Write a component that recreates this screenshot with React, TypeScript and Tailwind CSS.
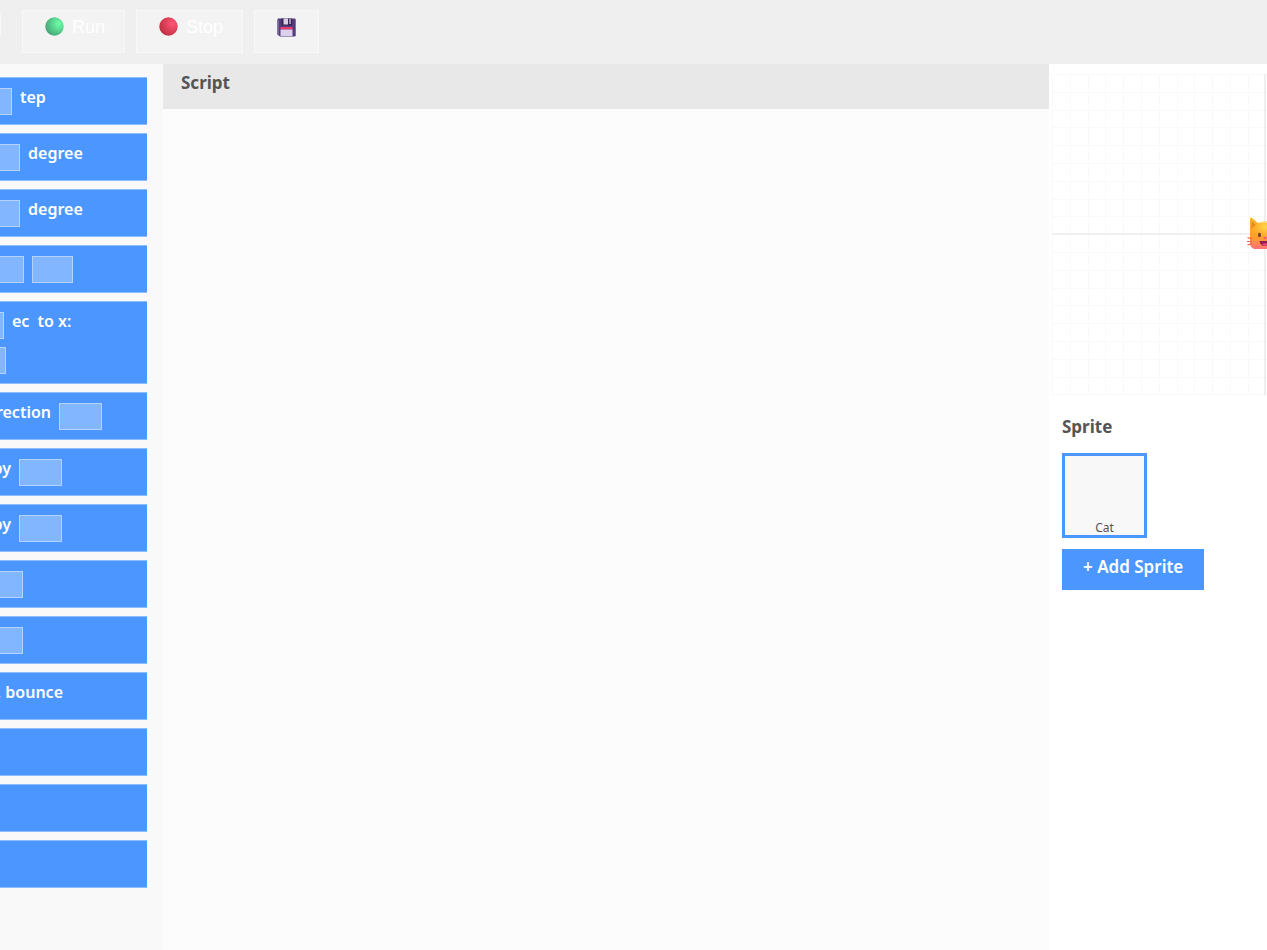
import React, { useState } from "react";

type Part =
  | { kind: "text"; value: string; width?: string }
  | { kind: "input"; label: string; width: string; cut?: boolean };

interface Block {
  id: string;
  rows: Part[][];
}

// Motion blocks, the palette is scrolled so the first part of a row may be cut
const BLOCKS: Block[] = [
  { id: "move", rows: [[{ kind: "input", label: "Steps", width: "w-3", cut: true }, { kind: "text", value: "tep" }]] },
  { id: "turn-right", rows: [[{ kind: "input", label: "Right", width: "w-5", cut: true }, { kind: "text", value: "degree" }]] },
  { id: "turn-left", rows: [[{ kind: "input", label: "Left", width: "w-5", cut: true }, { kind: "text", value: "degree" }]] },
  {
    id: "go-to",
    rows: [[{ kind: "input", label: "Go x", width: "w-6", cut: true }, { kind: "input", label: "Go y", width: "w-[41px]" }]],
  },
  {
    id: "glide",
    rows: [
      [
        { kind: "input", label: "Seconds", width: "w-1", cut: true },
        { kind: "text", value: "ec" },
        { kind: "text", value: "to x:" },
      ],
      [{ kind: "input", label: "Glide x", width: "w-[6px]", cut: true }],
    ],
  },
  {
    id: "direction",
    rows: [[{ kind: "text", value: "rection", width: "w-[51px]" }, { kind: "input", label: "Direction", width: "w-[43px]" }]],
  },
  { id: "change-x", rows: [[{ kind: "text", value: "by", width: "w-[11px]" }, { kind: "input", label: "Change x", width: "w-[43px]" }]] },
  { id: "change-y", rows: [[{ kind: "text", value: "by", width: "w-[11px]" }, { kind: "input", label: "Change y", width: "w-[43px]" }]] },
  { id: "set-x", rows: [[{ kind: "input", label: "Set x", width: "w-[23px]", cut: true }]] },
  { id: "set-y", rows: [[{ kind: "input", label: "Set y", width: "w-[23px]", cut: true }]] },
  { id: "bounce", rows: [[{ kind: "text", value: ", bounce", width: "w-[63px]" }]] },
  { id: "x-position", rows: [[]] },
  { id: "y-position", rows: [[]] },
  { id: "direction-value", rows: [[]] },
];

const CELL = 17.8;

function BlockPart({ part }: { part: Part }) {
  if (part.kind === "text") {
    return <span className={`flex justify-end whitespace-nowrap ${part.width ?? ""}`}>{part.value}</span>;
  }
  return (
    <input
      type="text"
      aria-label={part.label}
      className={`mt-[3px] h-[27px] shrink-0 border border-white/40 bg-white/30 ${part.cut ? "border-l-0" : ""} ${part.width}`}
    />
  );
}

function Ball({ id, from, to }: { id: string; from: string; to: string }) {
  return (
    <svg width="19" height="19" viewBox="0 0 19 19" aria-hidden="true">
      <defs>
        <radialGradient id={id} cx="0.72" cy="0.35" r="0.75">
          <stop offset="0" stopColor={from} />
          <stop offset="1" stopColor={to} />
        </radialGradient>
      </defs>
      <circle cx="9.5" cy="9.5" r="9.2" fill={`url(#${id})`} />
    </svg>
  );
}

function Floppy() {
  return (
    <svg width="19" height="19" viewBox="0 0 19 19" aria-hidden="true">
      <path d="M1.5 0.5H17.5Q18.7 0.5 18.7 1.7V17.3Q18.7 18.5 17.5 18.5H3L0.4 16.5V1.7Q0.4 0.5 1.5 0.5Z" fill="#533b7c" />
      <path d="M0.4 2H2V17.5L0.4 16.5Z" fill="#7a6a9c" />
      <rect x="4.5" y="0.5" width="10.5" height="7" fill="#36264f" />
      <rect x="6.5" y="0.5" width="4.5" height="6" fill="#d9cde6" />
      <rect x="12" y="0.5" width="2" height="5.5" fill="#9c8fb5" />
      <rect x="3.5" y="9" width="12" height="2.5" fill="#e8396b" />
      <rect x="3.5" y="11.5" width="12" height="6.5" fill="#dcd0ec" />
    </svg>
  );
}

function Cat() {
  return (
    <g transform="translate(195 143)">
      <defs>
        <linearGradient id="fur" x1="0.3" y1="0" x2="0.2" y2="1">
          <stop offset="0" stopColor="#fbb52c" />
          <stop offset="0.65" stopColor="#ff9d30" />
          <stop offset="1" stopColor="#ff6f7c" />
        </linearGradient>
        <radialGradient id="face" cx="0.5" cy="0.25" r="0.5">
          <stop offset="0" stopColor="#ffd848" />
          <stop offset="1" stopColor="#ffb62e" stopOpacity="0" />
        </radialGradient>
      </defs>
      <path d="M3 2Q3 0 5 1L11 6H25L31 1Q33 0 33 2V29Q31 32 28 32H8Q5 32 3 28Z" fill="url(#fur)" />
      <path d="M4.500 4L9 8L4.500 12Z" fill="#e88a25" />
      <ellipse cx="18" cy="16" rx="14" ry="12" fill="url(#face)" />
      <path d="M0.500 20.500L5 22M0 24.500H5M0.500 28L5 26.500" stroke="#f0604e" strokeWidth="1.200" fill="none" />
      <ellipse cx="12.500" cy="18" rx="1.500" ry="2.300" fill="#70402f" />
      <ellipse cx="23.500" cy="18" rx="1.500" ry="2.300" fill="#70402f" />
      <path d="M16 20H20L18 22.500Z" fill="#ff4d86" />
      <path d="M12.500 24H23.500Q23 29 18 29Q13 29 12.500 24Z" fill="#8c1f4f" />
      <path d="M15 27Q18 25.500 21 27Q20 29 18 29Q16 29 15 27Z" fill="#f0417e" />
    </g>
  );
}

function Stage() {
  const columns = Array.from({ length: 12 }, (_, i) => i);
  const lines = Array.from({ length: 19 }, (_, i) => i);
  return (
    <svg className="ml-[3px] mt-2.5 block h-[321px] w-[215px]" role="img" aria-label="Stage">
      {columns.map((i) => (
        <rect key={i} x={Math.round(i * CELL)} y="1" width="1" height="320" fill="#f9f9f9" />
      ))}
      {lines.map((i) => (
        <rect key={i} x="0" y={Math.round(i * CELL)} width="215" height="1" fill="#f9f9f9" />
      ))}
      <rect x="212" y="0" width="2" height="321" fill="#efefef" />
      <rect x="0" y="159" width="215" height="2" fill="#f0f0f0" />
      <Cat />
    </svg>
  );
}

export default function App() {
  const [running, setRunning] = useState<boolean>(false);

  return (
    <div className="flex min-h-screen flex-col overflow-hidden bg-white font-['Noto_Sans',sans-serif]">
      <header className="flex h-16 items-start gap-[11px] bg-[#efefef] pt-2.5 font-['Liberation_Sans',sans-serif] text-lg text-white">
        <input type="text" aria-label="Project name" className="mt-1 mr-2.5 h-[22px] w-px bg-[#f8f8f8]" />
        <button
          type="button"
          aria-pressed={running}
          onClick={() => setRunning(true)}
          className="flex h-[43px] gap-2 border border-[#f8f8f8] bg-[#f3f3f3] pt-[6px] pr-[19px] pl-[22px] leading-5"
        >
          <Ball id="run" from="#6dffa6" to="#45a577" />
          Run
        </button>
        <button
          type="button"
          onClick={() => setRunning(false)}
          className="flex h-[43px] gap-2 border border-[#f8f8f8] bg-[#f3f3f3] pt-[6px] pr-[19px] pl-[22px] leading-5"
        >
          <Ball id="stop" from="#ff5577" to="#bf3040" />
          Stop
        </button>
        <button type="button" aria-label="Save" className="h-[43px] border border-[#f8f8f8] bg-[#f3f3f3] px-[22px] pb-[9px]">
          <Floppy />
        </button>
      </header>

      <div className="grid flex-1 grid-cols-[163px_1fr_218px]">
        <aside className="flex flex-col gap-2 bg-[#f9f9f9] pt-[13px] pr-4">
          {BLOCKS.map((block) => (
            <div
              key={block.id}
              className="flex flex-col gap-[5px] border-y border-[#8cbdff] bg-[#4c97ff] pt-[7px] pb-[9px] text-base leading-6 font-semibold text-white"
            >
              {block.rows.map((row, i) => (
                <div key={i} className="flex h-[30px] items-start gap-2">
                  {row.map((part, j) => (
                    <BlockPart key={j} part={part} />
                  ))}
                </div>
              ))}
            </div>
          ))}
        </aside>

        <main className="bg-[#fcfcfc]">
          <h2 className="h-[45px] bg-[#e8e8e8] pt-[9px] pl-[18px] text-[17px] leading-5 font-bold text-[#555555]">Script</h2>
        </main>

        <section className="overflow-hidden bg-white">
          <Stage />
          <div className="flex flex-col items-start pt-[22px] pl-[13px]">
            <h2 className="text-[17px] leading-5 font-bold text-[#555555]">Sprite</h2>
            <button
              type="button"
              className="mt-4 flex h-[85px] w-[85px] items-end justify-center border-3 border-[#4c97ff] bg-[#f8f8f8] text-xs leading-[14px] text-[#555555]"
            >
              Cat
            </button>
            <button type="button" className="mt-[11px] h-[41px] bg-[#4c97ff] px-[21px] pb-[5px] text-[17px] leading-5 font-semibold text-white">
              + Add Sprite
            </button>
          </div>
        </section>
      </div>
    </div>
  );
}
